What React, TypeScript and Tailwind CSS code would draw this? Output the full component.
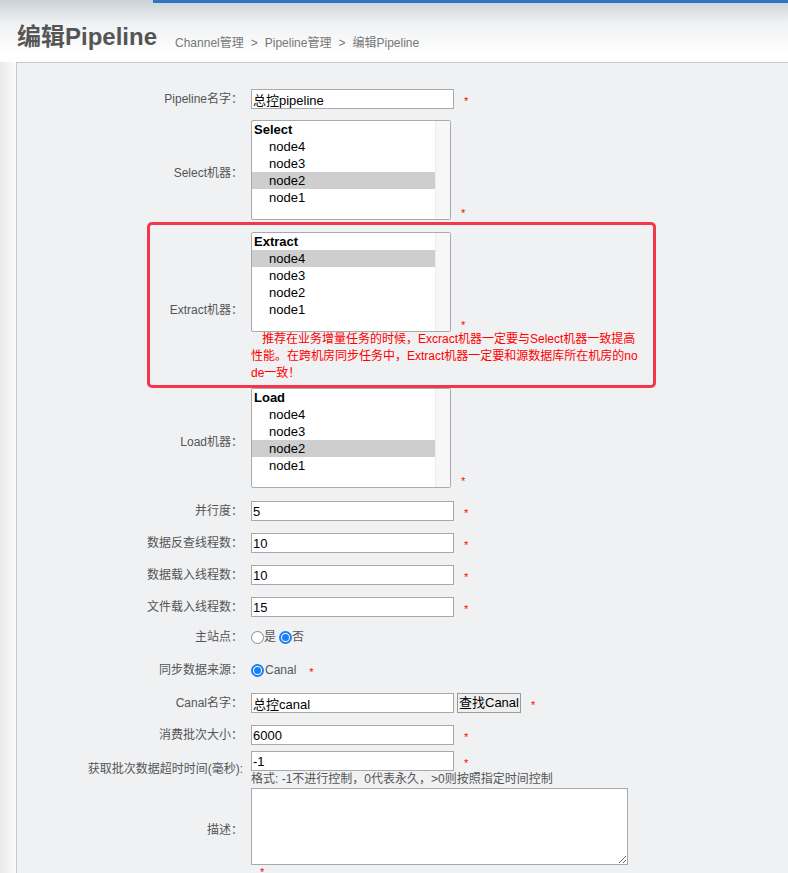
import clsx from 'clsx'
import React from 'react'

const nodes = ['node4', 'node3', 'node2', 'node1']

function Star({ className }: { className?: string }) {
  return (
    <span className={clsx('text-[11px] leading-none text-[#f00]', className)}>
      *
    </span>
  )
}

function Row({
  label,
  children,
  className,
  labelClassName,
}: {
  label: React.ReactNode
  children: React.ReactNode
  className?: string
  labelClassName?: string
}) {
  return (
    <div className={clsx('flex items-center', className ?? 'py-[6px]')}>
      <div
        className={clsx(
          'w-[226px] shrink-0 text-right text-[12px] leading-[18px] text-[#555]',
          labelClassName,
        )}
      >
        {label}
      </div>
      <div className="ml-[8px]">{children}</div>
    </div>
  )
}

function TextInput({ value, star = true }: { value: string; star?: boolean }) {
  return (
    <div className="flex items-center">
      <input
        readOnly
        defaultValue={value}
        className="block w-[203px] h-[20px] border border-[#a9a9a9] bg-white px-[1px] text-[13px] text-black outline-none"
      />
      {star && <Star className="ml-[10px] mt-[5px]" />}
    </div>
  )
}

function NodeSelect({ title, selected }: { title: string; selected: string }) {
  return (
    <div className="flex items-end">
      <div className="flex w-[200px] h-[100px] border border-[#aaa] rounded-[2px] bg-white overflow-hidden">
        <div className="flex-1">
          <div className="h-[17px] leading-[17px] pl-[2px] text-[13px] font-bold text-black">
            {title}
          </div>
          {nodes.map((n) => (
            <div
              key={n}
              className={clsx(
                'h-[17px] leading-[17px] pl-[17px] text-[13px] text-black',
                n === selected && 'bg-[#cecece]',
              )}
            >
              {n}
            </div>
          ))}
        </div>
        <div className="w-[15px] bg-[#f7f7f7] border-l border-[#ececec]" />
      </div>
      <Star className="ml-[10px] mb-[1px]" />
    </div>
  )
}

function Radio({ checked }: { checked?: boolean }) {
  return checked ? (
    <span className="flex items-center justify-center w-[13px] h-[13px] rounded-full border-2 border-[#1a7ef5] bg-white">
      <span className="w-[7px] h-[7px] rounded-full bg-[#1a7ef5]" />
    </span>
  ) : (
    <span className="w-[13px] h-[13px] rounded-full border border-[#8a8a8a] bg-white" />
  )
}

export default function App() {
  return (
    <div className="min-h-screen bg-white font-[Liberation_Sans,Noto_Sans_CJK_SC,sans-serif]">
      <header className="bg-linear-to-b from-[#cbd1d8] via-[#eef0f2] via-35% to-white to-85%">
        <div className="flex">
          <div className="w-[153px]" />
          <div className="flex-1 h-[3px] bg-[#2a77c0]" />
        </div>
        <div className="flex items-end pl-[17px] pt-[20px] pb-[11px]">
          <h1 className="text-[24px] leading-[28px] font-bold text-[#555]">
            编辑Pipeline
          </h1>
          <div className="ml-[18px] text-[12px] leading-[16px] text-[#777]">
            Channel管理<span className="mx-[7px]">&gt;</span>Pipeline管理
            <span className="mx-[7px]">&gt;</span>编辑Pipeline
          </div>
        </div>
      </header>

      <div className="flex">
        <div className="w-[16px] shrink-0 bg-linear-to-r from-[#eaeaea] to-[#fbfbfb]" />
        <div className="flex-1 min-h-[811px] bg-[#f0f1f3] border-t border-l border-[#c8c8c8] pt-[20px] pb-[20px]">
          <Row label="Pipeline名字：">
            <TextInput value="总控pipeline" />
          </Row>

          <Row
            label="Select机器："
            className="pt-[5px] pb-[6px]"
            labelClassName="pt-[6px]"
          >
            <NodeSelect title="Select" selected="node2" />
          </Row>

          <div className="relative">
            <Row
              label="Extract机器："
              className="pt-[6px]"
              labelClassName="pt-[6px]"
            >
              <div>
                <NodeSelect title="Extract" selected="node4" />
                <p className="-mt-[1px] w-[390px] break-all indent-[11px] text-[12px] leading-[17px] text-[#f00]">
                  推荐在业务增量任务的时候，Excract机器一定要与Select机器一致提高性能。在跨机房同步任务中，Extract机器一定要和源数据库所在机房的node一致！
                </p>
              </div>
            </Row>
            <div className="absolute left-[130px] top-[-4px] w-[509px] h-[166px] rounded-[5px] border-[3px] border-[#f4364c]" />
          </div>

          <Row
            label="Load机器："
            className="pt-[6px] pb-[7px]"
            labelClassName="pt-[7px]"
          >
            <NodeSelect title="Load" selected="node2" />
          </Row>

          <Row label="并行度：">
            <TextInput value="5" />
          </Row>
          <Row label="数据反查线程数：">
            <TextInput value="10" />
          </Row>
          <Row label="数据载入线程数：">
            <TextInput value="10" />
          </Row>
          <Row label="文件载入线程数：">
            <TextInput value="15" />
          </Row>

          <Row label="主站点：" className="pt-[4px] pb-[8px]">
            <div className="flex items-center h-[20px] text-[12px] text-[#555]">
              <Radio />
              <span>是</span>
              <span className="ml-[3px]" />
              <Radio checked />
              <span>否</span>
            </div>
          </Row>

          <Row label="同步数据来源：" className="pt-[5px] pb-[7px]">
            <div className="flex items-center h-[20px] text-[12px] text-[#555]">
              <Radio checked />
              <span className="ml-[1px]">Canal</span>
              <Star className="ml-[13px] mt-[5px]" />
            </div>
          </Row>

          <Row label="Canal名字：">
            <div className="flex items-center">
              <input
                readOnly
                defaultValue="总控canal"
                className="block w-[203px] h-[20px] border border-[#a9a9a9] bg-white px-[1px] text-[13px] text-black outline-none"
              />
              <button className="ml-[3px] h-[20px] px-[1px] border border-[#9a9a9a] bg-[#efefef] text-[13px] leading-[18px] text-black">
                查找Canal
              </button>
              <Star className="ml-[10px] mt-[5px]" />
            </div>
          </Row>

          <Row label="消费批次大小：">
            <TextInput value="6000" />
          </Row>

          <Row label="获取批次数据超时时间(毫秒):" className="pt-0 pb-0">
            <div>
              <TextInput value="-1" />
              <div className="h-[16px] text-[12px] leading-[16px] text-[#555]">
                格式: -1不进行控制，0代表永久，&gt;0则按照指定时间控制
              </div>
            </div>
          </Row>

          <Row label="描述：" className="pt-[1px]">
            <div>
              <textarea
                readOnly
                className="block w-[377px] h-[77px] border border-[#a9a9a9] bg-white outline-none"
              />
              <div className="-mt-[2px] h-[9px] leading-none">
                <Star className="ml-[9px]" />
              </div>
            </div>
          </Row>
        </div>
      </div>
    </div>
  )
}
